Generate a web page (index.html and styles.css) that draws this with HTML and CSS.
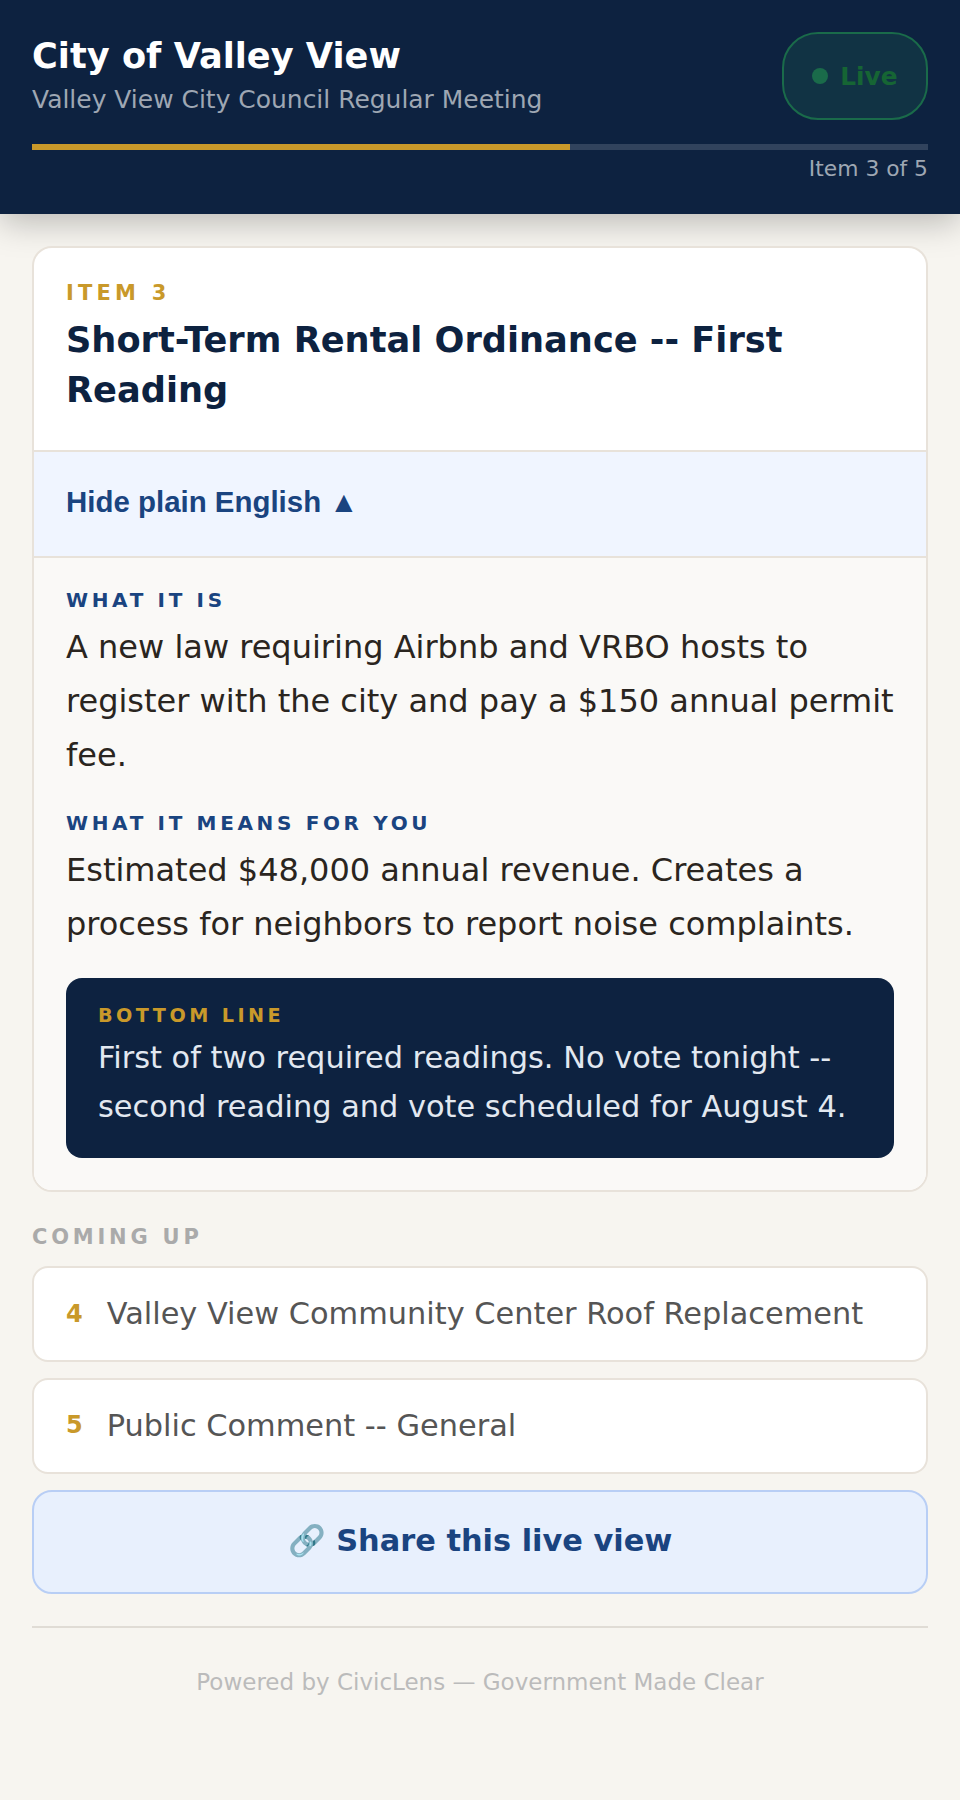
FILE: index.html
```html
<!DOCTYPE html>
<html lang="en">
<head>
    <meta charset="UTF-8">
    <meta name="viewport" content="width=device-width, initial-scale=1.0">
    <title>City of Valley View - Live</title>
    <link rel="stylesheet" href="styles.css">
</head>
<body>

<header class="top">
    <div class="top-row">
        <div class="top-titles">
            <h1>City of Valley View</h1>
            <p class="meeting">Valley View City Council Regular Meeting</p>
        </div>
        <div class="live"><span class="live-dot"></span>Live</div>
    </div>
    <div class="progress"><div class="progress-fill" style="width: 60%"></div></div>
    <p class="progress-label">Item 3 of 5</p>
</header>

<main class="page">
    <section class="card">
        <div class="card-head">
            <p class="item-num">ITEM 3</p>
            <h2>Short-Term Rental Ordinance -- First Reading</h2>
        </div>
        <button class="toggle">Hide plain English &#9650;</button>
        <div class="plain">
            <p class="plain-label">WHAT IT IS</p>
            <p class="plain-text">A new law requiring Airbnb and VRBO hosts to register with the city and pay a $150 annual permit fee.</p>
            <p class="plain-label">WHAT IT MEANS FOR YOU</p>
            <p class="plain-text">Estimated $48,000 annual revenue. Creates a process for neighbors to report noise complaints.</p>
            <div class="bottom-line">
                <p class="bottom-label">BOTTOM LINE</p>
                <p class="bottom-text">First of two required readings. No vote tonight -- second reading and vote scheduled for August 4.</p>
            </div>
        </div>
    </section>

    <p class="coming-label">COMING UP</p>
    <div class="upcoming"><span class="upcoming-num">4</span>Valley View Community Center Roof Replacement</div>
    <div class="upcoming"><span class="upcoming-num">5</span>Public Comment -- General</div>

    <button class="share">🔗 Share this live view</button>

    <footer class="foot">Powered by CivicLens — Government Made Clear</footer>
</main>

</body>
</html>
```

FILE: styles.css
```css
* {
    box-sizing: border-box;
}
body {
    margin: 0;
    min-height: 1800px;
    background-color: #f7f5f0;
    font-family: "DejaVu Sans", sans-serif;
    color: #1c1917;
}
p, h1, h2 {
    margin: 0;
}
.top {
    background-color: #0d2240;
    padding: 32px 32px 28px;
    box-shadow: 0 8px 32px rgba(0, 0, 0, 0.25);
}
.top-row {
    display: flex;
    justify-content: space-between;
    gap: 16px;
}
h1 {
    color: #fff;
    font-size: 35.2px;
    line-height: 48px;
}
.meeting {
    color: #9ea7b3;
    font-size: 24.96px;
    line-height: 40px;
}
.live {
    display: flex;
    align-items: center;
    gap: 12px;
    height: 88px;
    padding: 0 28.5px;
    border: 2px solid #1a6b4a;
    border-radius: 36px;
    background-color: #113344;
    color: #166534;
    font-size: 24.8px;
    font-weight: bold;
}
.live-dot {
    width: 16px;
    height: 16px;
    border-radius: 50%;
    background-color: #1a6b4a;
}
.progress {
    height: 6px;
    margin-top: 24px;
    background-color: #31435d;
}
.progress-fill {
    height: 100%;
    background-color: #c9992a;
}
.progress-label {
    margin-top: 1px;
    color: #9ea7b3;
    font-size: 21.8px;
    line-height: 35px;
    text-align: right;
}
.page {
    padding: 32px;
}
.card {
    border: 2px solid #e8e2da;
    border-radius: 20px;
    background-color: #fff;
    overflow: hidden;
}
.card-head {
    padding: 28px 32px 35px;
}
.item-num {
    color: #c9992a;
    font-size: 21px;
    font-weight: bold;
    letter-spacing: 0.2em;
    line-height: 34px;
}
h2 {
    margin-top: 5px;
    color: #0d2240;
    font-size: 35.2px;
    line-height: 50px;
}
.toggle {
    display: block;
    width: 100%;
    height: 108px;
    padding: 0 32px 5px;
    border: 0;
    border-top: 2px solid #e8e2da;
    border-bottom: 2px solid #e8e2da;
    background-color: #f0f5ff;
    color: #1a4480;
    font-family: "Liberation Sans", Arial, sans-serif;
    font-size: 29.44px;
    font-weight: bold;
    text-align: left;
}
.plain {
    padding: 26px 32px 32px;
    background-color: #faf9f7;
}
.plain-label {
    color: #1a4480;
    font-size: 20px;
    font-weight: bold;
    letter-spacing: 3.65px;
    line-height: 32px;
}
.plain-text {
    margin: 4px 0 25.2px;
    color: #2a2520;
    font-size: 32px;
    line-height: 54px;
}
.bottom-line {
    margin-top: 26.8px;
    padding: 23px 32px 27px;
    border-radius: 16px;
    background-color: #0d2240;
}
.bottom-label {
    color: #c9992a;
    font-size: 19.2px;
    font-weight: bold;
    letter-spacing: 0.18em;
    line-height: 30px;
}
.bottom-text {
    margin-top: 3px;
    color: #e2e8f0;
    font-size: 30.4px;
    line-height: 48.6px;
}
.coming-label {
    margin: 28px 0 12px;
    color: #aaa;
    font-size: 21px;
    font-weight: bold;
    letter-spacing: 0.18em;
    line-height: 34px;
}
.upcoming {
    display: flex;
    align-items: center;
    gap: 24px;
    height: 95.7px;
    margin-bottom: 16px;
    padding: 0 32px 1px;
    border: 2px solid #e8e2da;
    border-radius: 16px;
    background-color: #fff;
    color: #555;
    font-size: 30.4px;
}
.upcoming-num {
    color: #c9992a;
    font-size: 24px;
    font-weight: bold;
}
.share {
    display: block;
    width: 100%;
    height: 104px;
    padding-bottom: 3px;
    border: 2px solid #b8cef5;
    border-radius: 20px;
    background-color: #e8f0fd;
    color: #1a4480;
    font-family: "DejaVu Sans", sans-serif;
    font-size: 30.4px;
    font-weight: bold;
}
.foot {
    margin-top: 32px;
    padding-top: 36px;
    border-top: 2px solid #e0dcd5;
    color: #bbb;
    font-size: 23px;
    line-height: 36px;
    text-align: center;
}
```
